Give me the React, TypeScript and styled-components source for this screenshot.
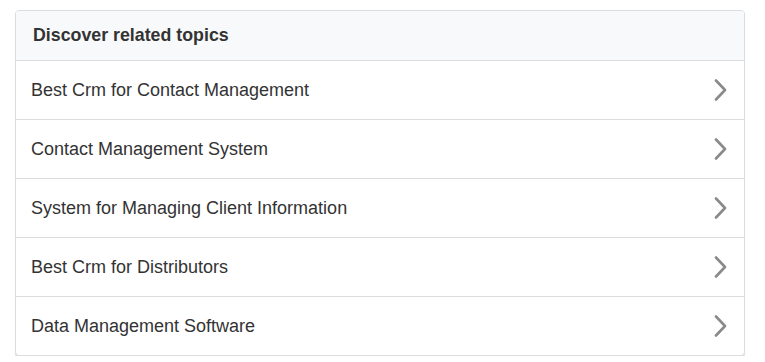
import React from "react";
import styled, { createGlobalStyle } from "styled-components";

const Global = createGlobalStyle`
  html, body { margin: 0; padding: 0; background: #ffffff; }
  body { font-family: "Liberation Sans", Arial, sans-serif; }
`;

const Page = styled.div`
  padding: 10px 20px 0 15px;
`;

const Card = styled.section`
  width: 730px;
  box-sizing: border-box;
  border: 1px solid #dcdde0;
  border-radius: 4px;
  background: #fff;
  box-shadow: 0 2px 1px rgba(0, 0, 0, 0.12);
  overflow: hidden;
`;

const Header = styled.h2`
  margin: 0;
  height: 49px;
  display: flex;
  align-items: center;
  padding: 0 17px;
  background: #f8f9fa;
  border-bottom: 1px solid #dcdde0;
  font-size: 17.8px;
  font-weight: 700;
  color: #333;
`;

const List = styled.ul`
  list-style: none;
  margin: 0;
  padding: 0;
`;

const Row = styled.li<{ $last?: boolean }>`
  height: 58px;
  display: flex;
  align-items: center;
  justify-content: space-between;
  padding: 0 17px 0 15px;
  border-bottom: ${(p) => (p.$last ? "none" : "1px solid #dcdde0")};
  font-size: 18px;
  color: #333;
  cursor: pointer;
`;

const Chevron = () => (
  <svg width="13" height="22" viewBox="0 0 13 22" fill="none">
    <path d="M2 1.5 L11 11 L2 20.5" stroke="#8a8a8a" strokeWidth="2.6" strokeLinecap="round" strokeLinejoin="round" />
  </svg>
);

const topics = [
  "Best Crm for Contact Management",
  "Contact Management System",
  "System for Managing Client Information",
  "Best Crm for Distributors",
  "Data Management Software",
];

export default function App() {
  return (
    <>
      <Global />
      <Page>
        <Card>
          <Header>Discover related topics</Header>
          <List>
            {topics.map((t, i) => (
              <Row key={t} $last={i === topics.length - 1}>
                <span>{t}</span>
                <Chevron />
              </Row>
            ))}
          </List>
        </Card>
      </Page>
    </>
  );
}
